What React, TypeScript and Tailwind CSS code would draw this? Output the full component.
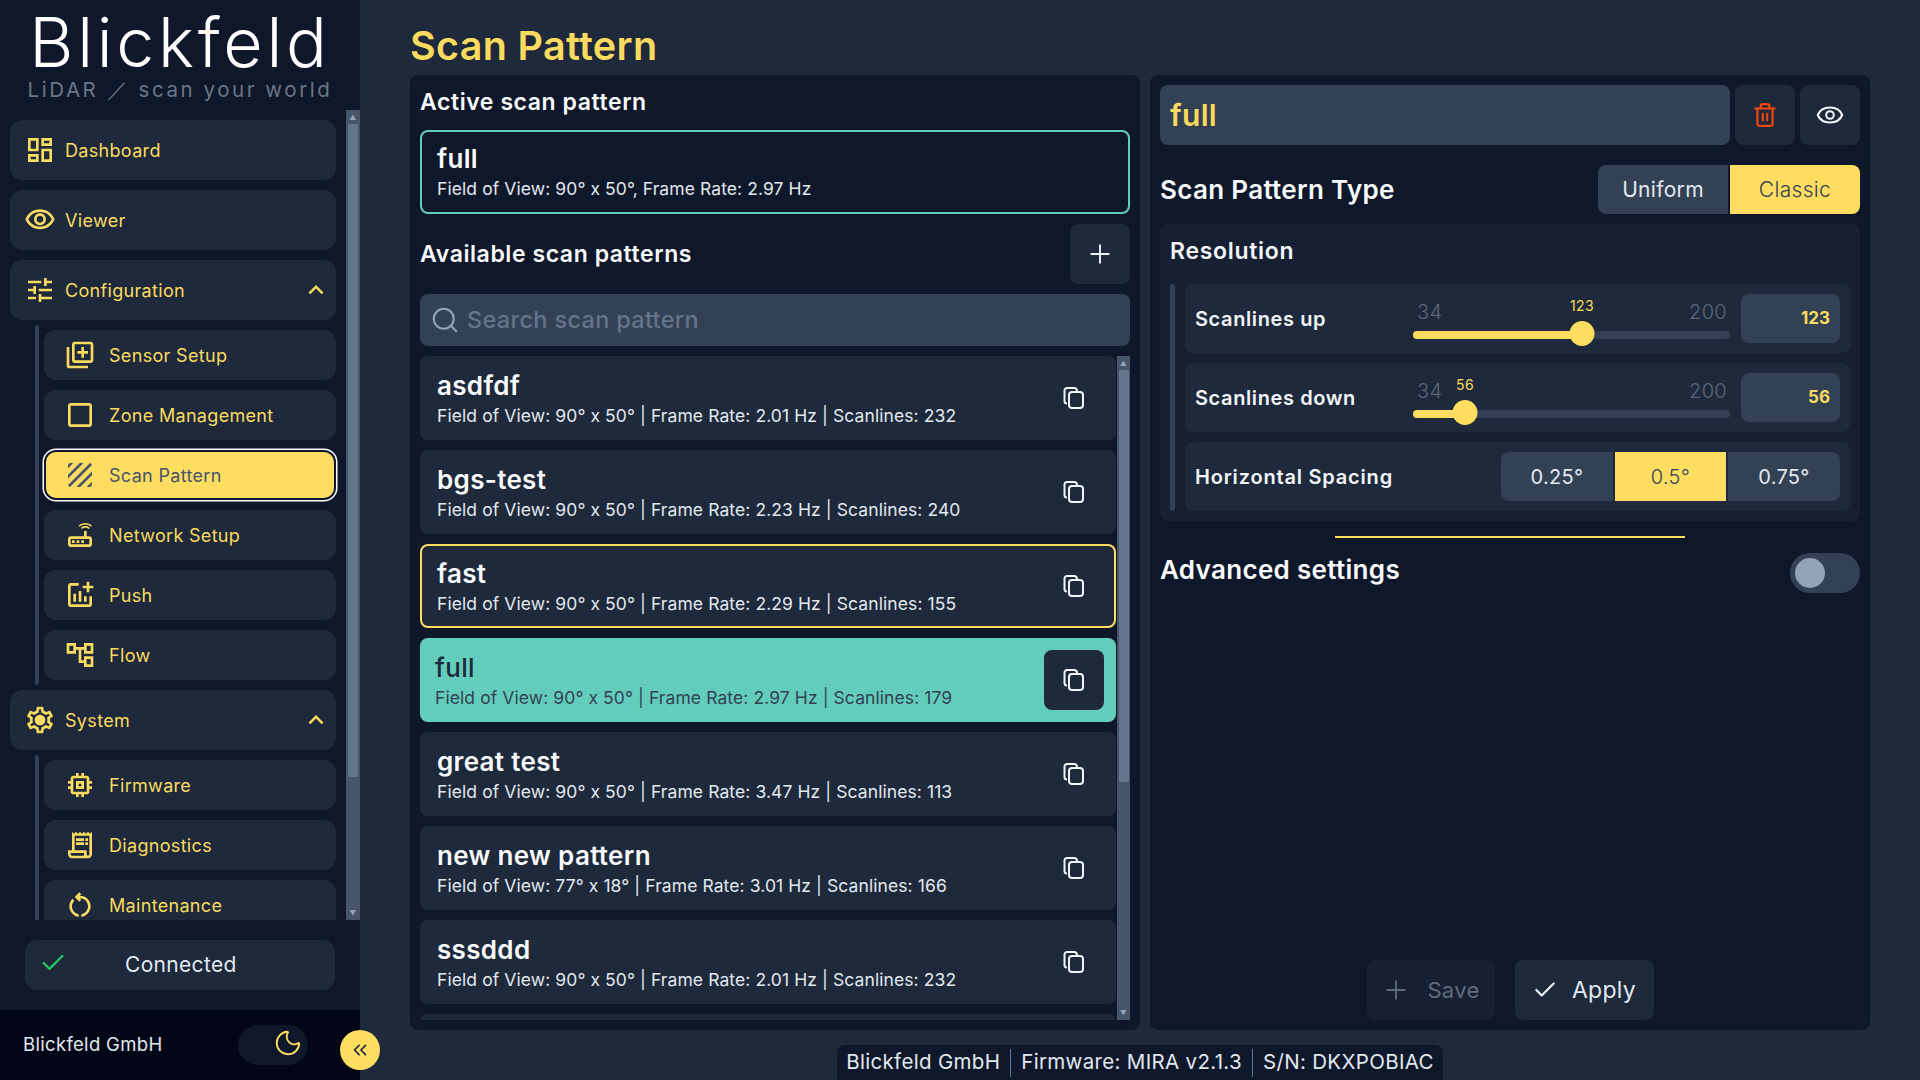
import type { ReactNode } from "react";
import { Check, ChevronsLeft, Moon, Plus, Search, Trash2 } from "lucide-react";
import {
  MdExpandLess,
  MdOutlineAccountTree,
  MdOutlineCheckBoxOutlineBlank,
  MdOutlineDashboard,
  MdOutlineLibraryAdd,
  MdOutlineMemory,
  MdOutlineReceiptLong,
  MdOutlineRestartAlt,
  MdOutlineRouter,
  MdOutlineSettings,
  MdOutlineTune,
  MdOutlineVisibility,
  MdTexture,
} from "react-icons/md";

const patterns = [
  { name: "asdfdf", info: "Field of View: 90° x 50° | Frame Rate: 2.01 Hz | Scanlines: 232" },
  { name: "bgs-test", info: "Field of View: 90° x 50° | Frame Rate: 2.23 Hz | Scanlines: 240" },
  { name: "fast", info: "Field of View: 90° x 50° | Frame Rate: 2.29 Hz | Scanlines: 155", hover: true },
  { name: "full", info: "Field of View: 90° x 50° | Frame Rate: 2.97 Hz | Scanlines: 179", active: true },
  { name: "great test", info: "Field of View: 90° x 50° | Frame Rate: 3.47 Hz | Scanlines: 113" },
  { name: "new new pattern", info: "Field of View: 77° x 18° | Frame Rate: 3.01 Hz | Scanlines: 166" },
  { name: "sssddd", info: "Field of View: 90° x 50° | Frame Rate: 2.01 Hz | Scanlines: 232" },
  { name: "", info: "" },
];

function CopyIcon() {
  return (
    <svg width="24" height="24" viewBox="0 0 24 24" fill="none" stroke="#f1f5f9" strokeWidth="2" strokeLinejoin="round">
      <path d="M5 17.5A2.5 2.5 0 0 1 2.5 15V4.5A2.5 2.5 0 0 1 5 2h7a3 3 0 0 1 3 3" />
      <rect x="7" y="6" width="14" height="16" rx="3" />
    </svg>
  );
}

// material "addchart", the package only has the variant with open axes
function PushIcon() {
  return (
    <svg width="32" height="32" viewBox="0 0 24 24" fill="currentColor">
      <path d="M22 5v2h-3v3h-2V7h-3V5h3V2h2v3h3zm-3 14H5V5h6V3H5c-1.1 0-2 .9-2 2v14c0 1.1.9 2 2 2h14c1.1 0 2-.9 2-2v-6h-2v6zm-4-6v4h2v-4h-2zm-4 4h2V9h-2v8zm-2 0v-6H7v6h2z" />
    </svg>
  );
}

function EyeIcon() {
  return (
    <svg width="28" height="28" viewBox="0 0 24 24" fill="none" stroke="#f1f5f9" strokeWidth="1.75">
      <path d="M1.5 12C5 3.5 19 3.5 22.5 12 19 20.5 5 20.5 1.5 12Z" strokeLinejoin="round" />
      <circle cx="12" cy="12" r="3.25" />
    </svg>
  );
}

function TopItem({ icon, label, chevron }: { icon: ReactNode; label: string; chevron?: boolean }) {
  return (
    <div className="flex h-[60px] w-[326px] shrink-0 items-center rounded-xl bg-[#1e293b] pl-[14px] pr-[5px] text-[18px] text-[#fadb5f]">
      {icon}
      <span className="ml-[9px]">{label}</span>
      {chevron && <MdExpandLess size={30} className="ml-auto" />}
    </div>
  );
}

function SubItem({ icon, label, active }: { icon: ReactNode; label: string; active?: boolean }) {
  if (active) {
    return (
      <div className="flex h-[50px] w-[292px] shrink-0 items-center gap-[13px] rounded-xl border-2 border-[#0f172a] bg-[#ffdd61] pl-[18px] text-[18px] text-[#475569] shadow-[0_0_0_1.5px_#ffffff]">
        {icon}
        <span>{label}</span>
      </div>
    );
  }
  return (
    <div className="flex h-[50px] w-[292px] shrink-0 items-center gap-[13px] rounded-xl bg-[#1e293b] pl-[20px] text-[18px] text-[#fadb5f]">
      {icon}
      <span>{label}</span>
    </div>
  );
}

function SubGroup({ children }: { children: ReactNode }) {
  return (
    <div className="-my-[5px] ml-[25px] flex shrink-0 gap-[5px]">
      <div className="w-[4px] rounded-full bg-[#334155]" />
      <div className="flex flex-col gap-[10px] py-[5px]">{children}</div>
    </div>
  );
}

function Scrollbar({ thumb }: { thumb: string }) {
  return (
    <div className={`relative flex shrink-0 flex-col bg-[#475569] ${thumb === "nav" ? "w-[14px]" : "w-[13px]"}`}>
      <div className="flex h-[14px] items-center justify-center text-[7px] leading-none text-[#94a3b8]">▲</div>
      <div className={`mx-auto w-[10px] bg-[#64748b] ${thumb === "nav" ? "h-[653px]" : "h-[412px]"}`} />
      <div className="mt-auto flex h-[14px] items-center justify-center text-[7px] leading-none text-[#94a3b8]">▼</div>
    </div>
  );
}

function Sidebar() {
  return (
    <aside className="relative flex h-full w-[360px] shrink-0 flex-col bg-[#0f172a]">
      <div className="flex h-[110px] shrink-0 flex-col items-center">
        <div className="mt-[7px] h-[70px] text-[68px] font-light leading-[70px] tracking-[0.055em] text-white">Blickfeld</div>
        <div className="text-[20.5px] leading-[26px] tracking-[0.125em] text-[#6b7686]">LiDAR ／ scan your world</div>
      </div>

      <div className="flex h-[810px] shrink-0 overflow-hidden">
        <nav className="flex w-[346px] shrink-0 flex-col gap-[10px] pl-[10px] pt-[10px]">
          <TopItem icon={<MdOutlineDashboard size={32} />} label="Dashboard" />
          <TopItem icon={<MdOutlineVisibility size={32} />} label="Viewer" />
          <TopItem icon={<MdOutlineTune size={32} />} label="Configuration" chevron />
          <SubGroup>
            <SubItem icon={<MdOutlineLibraryAdd size={32} />} label="Sensor Setup" />
            <SubItem icon={<MdOutlineCheckBoxOutlineBlank size={32} />} label="Zone Management" />
            <SubItem icon={<MdTexture size={32} />} label="Scan Pattern" active />
            <SubItem icon={<MdOutlineRouter size={32} />} label="Network Setup" />
            <SubItem icon={<PushIcon />} label="Push" />
            <SubItem icon={<MdOutlineAccountTree size={32} />} label="Flow" />
          </SubGroup>
          <TopItem
            icon={
              <span className="relative flex h-[32px] w-[32px] items-center justify-center">
                <MdOutlineSettings size={32} />
                <span className="absolute h-[9px] w-[9px] rounded-full bg-[#fadb5f]" />
              </span>
            }
            label="System"
            chevron
          />
          <SubGroup>
            <SubItem icon={<MdOutlineMemory size={32} />} label="Firmware" />
            <SubItem icon={<MdOutlineReceiptLong size={32} />} label="Diagnostics" />
            <SubItem icon={<MdOutlineRestartAlt size={32} />} label="Maintenance" />
          </SubGroup>
        </nav>
        <Scrollbar thumb="nav" />
      </div>

      <div className="ml-[25px] mt-[20px] flex h-[50px] w-[310px] shrink-0 items-center rounded-xl bg-[#1e293b] pl-[14px] text-[21px] text-[#e2e8f0]">
        <Check size={28} strokeWidth={2} className="mb-[5px] text-[#22c55e]" />
        <span className="ml-[58px]">Connected</span>
      </div>

      <div className="mt-auto flex h-[70px] shrink-0 items-center bg-[#020617] pl-[23px]">
        <span className="w-[215px] text-[18.5px] text-[#e2e8f0]">Blickfeld GmbH</span>
        <div className="flex h-[40px] w-[70px] items-center justify-end rounded-full bg-[#0f172a] pr-[5px] text-[#fadb5f]">
          <Moon size={30} strokeWidth={1.5} className="mb-[4px]" />
        </div>
      </div>

      <button className="absolute left-[340px] top-[1030px] flex h-[40px] w-[40px] items-center justify-center rounded-full bg-[#ffdd61] text-[#1e293b]">
        <ChevronsLeft size={22} strokeWidth={1.75} />
      </button>
    </aside>
  );
}

function PatternRow({ name, info, hover, active }: { name: string; info: string; hover?: boolean; active?: boolean }) {
  const box = active
    ? "bg-[#63cdbc] pl-[15px] pr-[12px] text-[#1e293b]"
    : hover
      ? "border-2 border-[#ffdd61] bg-[#1e293b] pl-[15px] pr-[10px] text-[#f8fafc]"
      : "bg-[#1e293b] pl-[17px] pr-[12px] text-[#f8fafc]";
  return (
    <div className={`flex h-[84px] w-[696px] shrink-0 items-center rounded-lg ${box}`}>
      <div className="flex min-w-0 flex-1 flex-col pt-[2px]">
        <span className={`text-[26px] leading-[30px] ${active ? "font-medium" : "font-semibold"}`}>{name}</span>
        <span
          className={`mt-[3px] text-[17.5px] leading-[24px] tracking-[0.005em] ${active ? "text-[#334155]" : "text-[#e2e8f0]"}`}
        >
          {info}
        </span>
      </div>
      {name && (
        <div className={`flex h-[60px] w-[60px] items-center justify-center rounded-lg ${active ? "bg-[#1e293b]" : ""}`}>
          <CopyIcon />
        </div>
      )}
    </div>
  );
}

function PatternPanel() {
  return (
    <section className="flex h-[955px] w-[730px] shrink-0 flex-col rounded-lg bg-[#0f172a] px-[10px]">
      <div className="flex h-[55px] shrink-0 items-center text-[23px] font-semibold tracking-[0.025em] text-[#f8fafc]">Active scan pattern</div>
      <div className="flex h-[84px] shrink-0 flex-col justify-center rounded-lg border-2 border-[#63cdbc] pl-[15px] pt-[1px]">
        <span className="text-[26px] font-semibold leading-[30px] text-[#f8fafc]">full</span>
        <span className="mt-[3px] text-[17.5px] leading-[24px] tracking-[0.005em] text-[#e2e8f0]">Field of View: 90° x 50°, Frame Rate: 2.97 Hz</span>
      </div>
      <div className="mt-[10px] flex h-[60px] shrink-0 items-center justify-between">
        <span className="text-[23px] font-semibold tracking-[0.025em] text-[#f8fafc]">Available scan patterns</span>
        <div className="flex h-[60px] w-[60px] items-center justify-center rounded-lg bg-[#1e293b] text-[#f1f5f9]">
          <Plus size={30} strokeWidth={1.5} />
        </div>
      </div>
      <div className="mt-[10px] flex h-[52px] shrink-0 items-center rounded-lg bg-[#334155] pl-[10px] text-[23.5px] font-medium text-[#64748b]">
        <Search size={30} strokeWidth={1.6} className="text-[#94a3b8]" />
        <span className="ml-[7px]">Search scan pattern</span>
      </div>
      <div className="mt-[10px] flex h-[664px] shrink-0 overflow-hidden">
        <div className="flex w-[697px] shrink-0 flex-col gap-[10px]">
          {patterns.map((p, i) => (
            <PatternRow key={i} {...p} />
          ))}
        </div>
        <Scrollbar thumb="list" />
      </div>
    </section>
  );
}

function SliderRow({ label, value, pos }: { label: string; value: number; pos: number }) {
  return (
    <div className="flex h-[69px] items-center rounded-lg bg-[#1e293b] pl-[10px]">
      <span className="w-[218px] shrink-0 text-[20px] font-semibold tracking-[0.03em] text-[#f1f5f9]">{label}</span>
      <div className="relative h-[69px] w-[317px] shrink-0">
        <span className="absolute left-[4px] top-[14px] text-[20px] font-light leading-[28px] text-[#5b6779]">34</span>
        <span className="absolute right-[3px] top-[14px] text-[20px] font-light leading-[28px] text-[#5b6779]">200</span>
        <span
          className="absolute top-[13px] -translate-x-1/2 text-[14px] leading-[18px] text-[#fadb5f]"
          style={{ left: pos }}
        >
          {value}
        </span>
        <div className="absolute left-0 right-0 top-[47px] h-[8px] rounded-full bg-[#334155]" />
        <div className="absolute left-0 top-[47px] h-[8px] rounded-full bg-[#ffdd61]" style={{ width: pos }} />
        <div
          className="absolute top-[37px] h-[25px] w-[25px] -translate-x-1/2 rounded-full bg-[#ffdd61]"
          style={{ left: pos }}
        />
      </div>
      <div className="ml-[11px] flex h-[49px] w-[99px] items-center justify-end rounded-lg bg-[#334155] pr-[10px] text-[17px] font-bold tracking-normal text-[#fadb5f]">
        {value}
      </div>
    </div>
  );
}

function SettingsPanel() {
  return (
    <section className="flex h-[955px] w-[720px] shrink-0 flex-col rounded-lg bg-[#0f172a] p-[10px]">
      <div className="flex h-[60px] shrink-0 gap-[5px]">
        <div className="flex w-[570px] items-center rounded-lg bg-[#334155] pl-[10px] text-[30px] font-semibold text-[#fadb5f]">full</div>
        <div className="flex w-[60px] items-center justify-center rounded-lg bg-[#1e293b] text-[#f0470f]">
          <Trash2 size={26} strokeWidth={2} />
        </div>
        <div className="flex w-[60px] items-center justify-center rounded-lg bg-[#1e293b]">
          <EyeIcon />
        </div>
      </div>

      <div className="mt-[20px] flex h-[49px] shrink-0 items-center">
        <span className="text-[26px] font-semibold text-[#f8fafc]">Scan Pattern Type</span>
        <div className="ml-auto flex gap-[2px] text-[21px]">
          <div className="flex h-[49px] w-[130px] items-center justify-center rounded-l-lg bg-[#334155] text-[#e2e8f0]">Uniform</div>
          <div className="flex h-[49px] w-[130px] items-center justify-center rounded-r-lg bg-[#ffdd61] font-light text-[#334155]">Classic</div>
        </div>
      </div>

      <div className="mt-[10px] h-[297px] shrink-0 rounded-lg bg-[#172033] px-[10px]">
        <div className="flex h-[60px] items-center pb-[6px] text-[23px] font-semibold tracking-[0.03em] text-[#f1f5f9]">Resolution</div>
        <div className="flex gap-[10px]">
          <div className="h-[227px] w-[5px] shrink-0 rounded-full bg-[#334155]" />
          <div className="flex w-[665px] flex-col gap-[10px]">
            <SliderRow label="Scanlines up" value={123} pos={169} />
            <SliderRow label="Scanlines down" value={56} pos={52} />
            <div className="flex h-[69px] items-center rounded-lg bg-[#1e293b] pl-[10px] pr-[10px]">
              <span className="text-[20px] font-semibold tracking-[0.04em] text-[#f1f5f9]">Horizontal Spacing</span>
              <div className="ml-auto flex gap-[2px] text-[20px]">
                <div className="flex h-[49px] w-[112px] items-center justify-center rounded-l-lg bg-[#334155] text-[#e2e8f0]">0.25°</div>
                <div className="flex h-[49px] w-[111px] items-center justify-center bg-[#ffdd61] font-light text-[#334155]">0.5°</div>
                <div className="flex h-[49px] w-[112px] items-center justify-center rounded-r-lg bg-[#334155] text-[#e2e8f0]">0.75°</div>
              </div>
            </div>
          </div>
        </div>
      </div>

      <div className="mx-auto mt-[15px] h-[2px] w-[350px] shrink-0 bg-[#ffdd61]" />

      <div className="mt-[15px] flex h-[40px] shrink-0 items-center justify-between">
        <span className="pb-[7px] text-[26px] font-semibold text-[#f8fafc]">Advanced settings</span>
        <div className="flex h-[40px] w-[70px] items-center rounded-full bg-[#334155] pl-[5px]">
          <div className="h-[30px] w-[30px] rounded-full bg-[#94a3b8]" />
        </div>
      </div>

      <div className="mt-auto flex justify-center gap-[20px]">
        <div className="flex h-[60px] w-[128px] items-center justify-center gap-[16px] rounded-lg bg-[#172033] text-[22px] text-[#5f6b7c]">
          <Plus size={30} strokeWidth={1.5} />
          <span>Save</span>
        </div>
        <div className="flex h-[60px] w-[139px] items-center justify-center gap-[14px] rounded-lg bg-[#1e293b] text-[23px] text-[#e2e8f0]">
          <Check size={26} strokeWidth={2} className="text-[#f1f5f9]" />
          <span>Apply</span>
        </div>
      </div>
    </section>
  );
}

export default function App() {
  return (
    <div className="flex h-[1080px] w-[1920px] overflow-hidden bg-[#1e293b] tracking-[0.02em] [font-family:Inter,'Liberation_Sans',sans-serif]">
      <Sidebar />
      <main className="flex min-w-0 flex-1 flex-col pl-[50px]">
        <h1 className="flex h-[75px] shrink-0 items-center pt-[19px] text-[39.5px] font-semibold text-[#fadb5f]">Scan Pattern</h1>
        <div className="flex gap-[10px]">
          <PatternPanel />
          <SettingsPanel />
        </div>
        <div className="mt-[15px] flex justify-center pr-[50px]">
          <div className="flex h-[35px] items-center rounded-t-lg bg-[#0f172a] px-[9px] text-[20.5px] text-[#e2e8f0]">
            <span>Blickfeld GmbH</span>
            <span className="mx-[10px] h-[28px] w-[1px] bg-[#64748b]" />
            <span>Firmware: MIRA v2.1.3</span>
            <span className="mx-[10px] h-[28px] w-[1px] bg-[#64748b]" />
            <span>S/N: DKXPOBIAC</span>
          </div>
        </div>
      </main>
    </div>
  );
}
